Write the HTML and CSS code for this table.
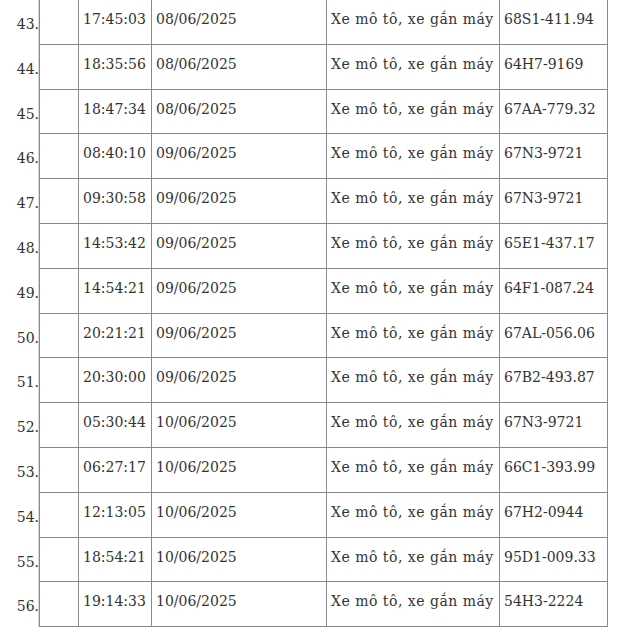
FILE: index.html
```html
<!DOCTYPE html>
<html lang="vi">
<head>
<meta charset="utf-8">
<link rel="stylesheet" href="styles.css">
</head>
<body>
<table class="list">
<colgroup>
<col class="c-num"><col class="c-blank"><col class="c-time"><col class="c-date"><col class="c-type"><col class="c-plate">
</colgroup>
<tbody>
<tr><td class="num">43.</td><td class="blank"></td><td>17:45:03</td><td>08/06/2025</td><td class="type">Xe mô tô, xe gắn máy</td><td>68S1-411.94</td></tr>
<tr><td class="num">44.</td><td class="blank"></td><td>18:35:56</td><td>08/06/2025</td><td class="type">Xe mô tô, xe gắn máy</td><td>64H7-9169</td></tr>
<tr><td class="num">45.</td><td class="blank"></td><td>18:47:34</td><td>08/06/2025</td><td class="type">Xe mô tô, xe gắn máy</td><td>67AA-779.32</td></tr>
<tr><td class="num">46.</td><td class="blank"></td><td>08:40:10</td><td>09/06/2025</td><td class="type">Xe mô tô, xe gắn máy</td><td>67N3-9721</td></tr>
<tr><td class="num">47.</td><td class="blank"></td><td>09:30:58</td><td>09/06/2025</td><td class="type">Xe mô tô, xe gắn máy</td><td>67N3-9721</td></tr>
<tr><td class="num">48.</td><td class="blank"></td><td>14:53:42</td><td>09/06/2025</td><td class="type">Xe mô tô, xe gắn máy</td><td>65E1-437.17</td></tr>
<tr><td class="num">49.</td><td class="blank"></td><td>14:54:21</td><td>09/06/2025</td><td class="type">Xe mô tô, xe gắn máy</td><td>64F1-087.24</td></tr>
<tr><td class="num">50.</td><td class="blank"></td><td>20:21:21</td><td>09/06/2025</td><td class="type">Xe mô tô, xe gắn máy</td><td>67AL-056.06</td></tr>
<tr><td class="num">51.</td><td class="blank"></td><td>20:30:00</td><td>09/06/2025</td><td class="type">Xe mô tô, xe gắn máy</td><td>67B2-493.87</td></tr>
<tr><td class="num">52.</td><td class="blank"></td><td>05:30:44</td><td>10/06/2025</td><td class="type">Xe mô tô, xe gắn máy</td><td>67N3-9721</td></tr>
<tr><td class="num">53.</td><td class="blank"></td><td>06:27:17</td><td>10/06/2025</td><td class="type">Xe mô tô, xe gắn máy</td><td>66C1-393.99</td></tr>
<tr><td class="num">54.</td><td class="blank"></td><td>12:13:05</td><td>10/06/2025</td><td class="type">Xe mô tô, xe gắn máy</td><td>67H2-0944</td></tr>
<tr><td class="num">55.</td><td class="blank"></td><td>18:54:21</td><td>10/06/2025</td><td class="type">Xe mô tô, xe gắn máy</td><td>95D1-009.33</td></tr>
<tr><td class="num">56.</td><td class="blank"></td><td>19:14:33</td><td>10/06/2025</td><td class="type">Xe mô tô, xe gắn máy</td><td>54H3-2224</td></tr>
</tbody>
</table>
</body>
</html>
```
FILE: styles.css
```css
html, body {
  margin: 0;
  padding: 0;
  background: #fff;
}
body {
  font-family: "DejaVu Serif", "Liberation Serif", serif;
  font-size: 14px;
  color: #333;
}
.list {
  border-collapse: separate;
  border-spacing: 0;
  table-layout: fixed;
  width: 608px;
}
.c-num { width: 39px; }
.c-blank { width: 40px; }
.c-time { width: 73px; }
.c-date { width: 175px; }
.c-type { width: 173px; }
.c-plate { width: 108px; }
.list td {
  box-sizing: border-box;
  height: 44.8px;
  padding: 8px 3px 0 4px;
  line-height: 22px;
  vertical-align: top;
  white-space: nowrap;
  border-right: 1px solid #8a8a8a;
  border-bottom: 1px solid #8a8a8a;
}
.list td.num {
  border: none;
  text-align: right;
  padding: 13px 0 0 0;
}
.list td.blank {
  border-left: 1px solid #8a8a8a;
  box-shadow: -1px 0 0 #d8d8d8;
}
.list td.type {
  letter-spacing: 0.5px;
}
```
